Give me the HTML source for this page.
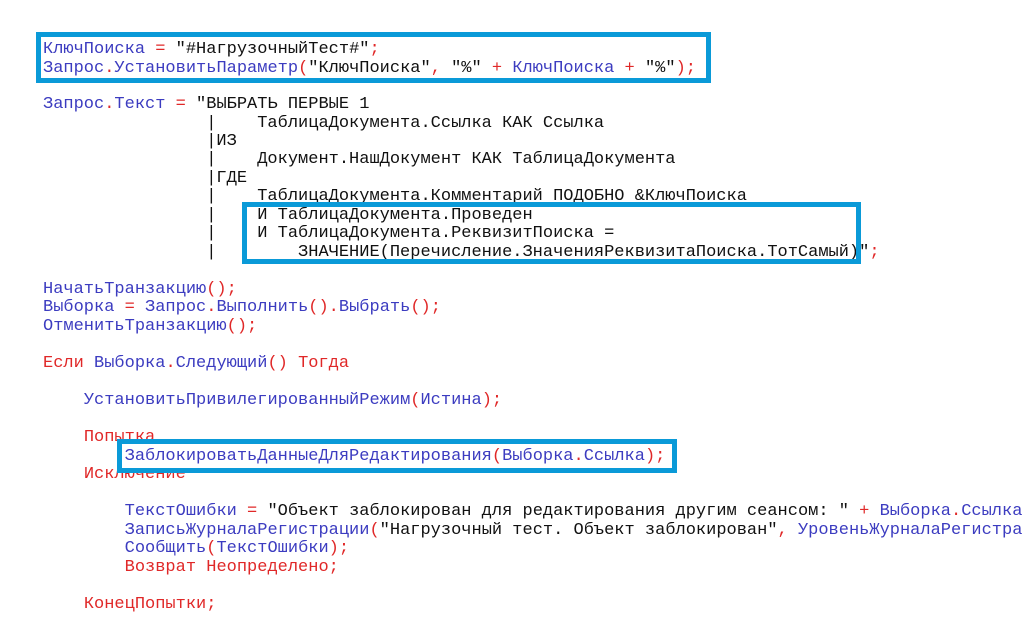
<!DOCTYPE html>
<html><head><meta charset="utf-8"><style>
html,body{margin:0;width:1023px;height:642px;overflow:hidden}
body{background:#fff;position:relative;font-family:"Liberation Mono","DejaVu Sans Mono",monospace;font-size:17px;color:#111}
.l{position:absolute;left:43px;right:0;overflow:hidden;line-height:18px;white-space:pre}
.b{color:#3c3cc0}.r{color:#e02828}
.box{position:absolute;border:5px solid #0a9ad8;box-sizing:border-box}
</style></head><body>
<div class="l" style="top:41px"><span class="b">КлючПоиска</span> <span class="r">=</span> "#НагрузочныйТест#"<span class="r">;</span></div>
<div class="l" style="top:60px"><span class="b">Запрос</span><span class="r">.</span><span class="b">УстановитьПараметр</span><span class="r">(</span>"КлючПоиска"<span class="r">,</span> "%" <span class="r">+</span> <span class="b">КлючПоиска</span> <span class="r">+</span> "%"<span class="r">);</span></div>
<div class="l" style="top:96px"><span class="b">Запрос</span><span class="r">.</span><span class="b">Текст</span> <span class="r">=</span> "ВЫБРАТЬ ПЕРВЫЕ 1</div>
<div class="l" style="top:115px">                |    ТаблицаДокумента.Ссылка КАК Ссылка</div>
<div class="l" style="top:133px">                |ИЗ</div>
<div class="l" style="top:151px">                |    Документ.НашДокумент КАК ТаблицаДокумента</div>
<div class="l" style="top:170px">                |ГДЕ</div>
<div class="l" style="top:188px">                |    ТаблицаДокумента.Комментарий ПОДОБНО &amp;КлючПоиска</div>
<div class="l" style="top:207px">                |    И ТаблицаДокумента.Проведен</div>
<div class="l" style="top:225px">                |    И ТаблицаДокумента.РеквизитПоиска =</div>
<div class="l" style="top:244px">                |        ЗНАЧЕНИЕ(Перечисление.ЗначенияРеквизитаПоиска.ТотСамый)"<span class="r">;</span></div>
<div class="l" style="top:281px"><span class="b">НачатьТранзакцию</span><span class="r">();</span></div>
<div class="l" style="top:299px"><span class="b">Выборка</span> <span class="r">=</span> <span class="b">Запрос</span><span class="r">.</span><span class="b">Выполнить</span><span class="r">().</span><span class="b">Выбрать</span><span class="r">();</span></div>
<div class="l" style="top:318px"><span class="b">ОтменитьТранзакцию</span><span class="r">();</span></div>
<div class="l" style="top:355px"><span class="r">Если</span> <span class="b">Выборка</span><span class="r">.</span><span class="b">Следующий</span><span class="r">()</span> <span class="r">Тогда</span></div>
<div class="l" style="top:392px">    <span class="b">УстановитьПривилегированныйРежим</span><span class="r">(</span><span class="b">Истина</span><span class="r">);</span></div>
<div class="l" style="top:429px">    <span class="r">Попытка</span></div>
<div class="l" style="top:448px">        <span class="b">ЗаблокироватьДанныеДляРедактирования</span><span class="r">(</span><span class="b">Выборка</span><span class="r">.</span><span class="b">Ссылка</span><span class="r">);</span></div>
<div class="l" style="top:466px">    <span class="r">Исключение</span></div>
<div class="l" style="top:503px">        <span class="b">ТекстОшибки</span> <span class="r">=</span> "Объект заблокирован для редактирования другим сеансом: " <span class="r">+</span> <span class="b">Выборка</span><span class="r">.</span><span class="b">Ссылка</span><span class="r">;</span></div>
<div class="l" style="top:522px">        <span class="b">ЗаписьЖурналаРегистрации</span><span class="r">(</span>"Нагрузочный тест. Объект заблокирован"<span class="r">,</span> <span class="b">УровеньЖурналаРегистрации</span><span class="r">.</span><span class="b">Ошибка</span><span class="r">);</span></div>
<div class="l" style="top:540px">        <span class="b">Сообщить</span><span class="r">(</span><span class="b">ТекстОшибки</span><span class="r">);</span></div>
<div class="l" style="top:559px">        <span class="r">Возврат Неопределено;</span></div>
<div class="l" style="top:596px">    <span class="r">КонецПопытки;</span></div>
<div class="box" style="left:36px;top:32px;width:675px;height:51px"></div>
<div class="box" style="left:242px;top:202px;width:619px;height:62px"></div>
<div class="box" style="left:117px;top:439px;width:560px;height:34px"></div>
</body></html>
